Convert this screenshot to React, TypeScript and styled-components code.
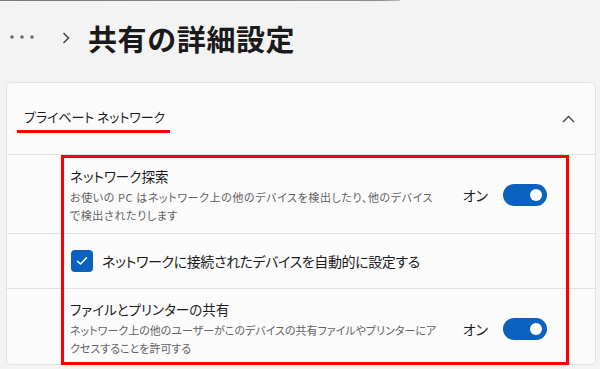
import React from "react";
import styled, { createGlobalStyle } from "styled-components";

const Global = createGlobalStyle`
  html, body { margin: 0; padding: 0; }
  body {
    background: #f3f3f3;
    font-family: "Noto Sans CJK JP", "Noto Sans", sans-serif;
    color: #1b1b1b;
    width: 600px;
    height: 369px;
    overflow: hidden;
  }
`;

const Page = styled.div`
  display: flex;
  flex-direction: column;
  width: 600px;
`;

const TopRule = styled.div`
  width: 400px;
  height: 1px;
  background: linear-gradient(to right, #7a7a7a, #8c8c8c 95%, #bdbdbd);
`;

const Header = styled.div`
  height: 74px;
  display: flex;
  align-items: center;
  padding-left: 9px;
`;

const Dots = styled.svg`
  width: 28px;
  height: 6px;
  margin-top: -2px;
`;

const Crumb = styled.svg`
  width: 8px;
  height: 12px;
  margin-left: 25px;
  margin-top: -1px;
`;

const Title = styled.h1`
  margin: 0 0 0 18px;
  font-size: 29px;
  font-weight: 700;
  letter-spacing: 0.6px;
  color: #1a1a1a;
  line-height: 1;
`;

const Card = styled.div`
  position: relative;
  margin: 7px 0 0 6px;
  width: 590px;
  box-sizing: border-box;
  border: 1px solid #e3e3e3;
  border-radius: 5px;
  background: #fbfbfb;
  display: flex;
  flex-direction: column;
`;

const ExpanderHead = styled.div`
  height: 72px;
  box-sizing: border-box;
  border-bottom: 1px solid #e1e1e1;
  display: flex;
  align-items: center;
  justify-content: space-between;
  padding: 3px 20px 0 10px;
`;

const HeadLabel = styled.span`
  display: inline-block;
  font-size: 13px;
  line-height: 20px;
  font-feature-settings: "palt";
  letter-spacing: -0.1px;
  color: #1b1b1b;
  padding: 0 5px 3px 7px;
  border-bottom: 3px solid #ff0000;
`;

const Chevron = styled.svg`
  width: 13px;
  height: 8px;
  margin-bottom: 3px;
`;

const Row = styled.div<{ $h: number; $pt?: number }>`
  height: ${(p) => p.$h}px;
  box-sizing: border-box;
  display: flex;
  align-items: center;
  padding: ${(p) => p.$pt ?? 0}px 48px 0 63px;
  & + & {
    border-top: 1px solid #e1e1e1;
  }
`;

const Text = styled.div`
  flex: 1;
  display: flex;
  flex-direction: column;
`;

const RowTitle = styled.div`
  font-size: 13.5px;
  line-height: 19px;
  font-feature-settings: "palt";
  color: #1b1b1b;
`;

const RowDesc = styled.div<{ $ls: number }>`
  margin-top: 2px;
  font-size: 11px;
  line-height: 18px;
  letter-spacing: ${(p) => p.$ls}px;
  font-feature-settings: "palt";
  white-space: nowrap;
  color: #626262;
`;

const StateLabel = styled.span`
  font-size: 14px;
  font-feature-settings: "palt";
  color: #1b1b1b;
  margin-right: 15px;
`;

const Toggle = styled.div<{ $on: boolean }>`
  width: 44px;
  height: 22px;
  border-radius: 11px;
  background: ${(p) => (p.$on ? "#0b62be" : "transparent")};
  display: flex;
  align-items: center;
  justify-content: ${(p) => (p.$on ? "flex-end" : "flex-start")};
  padding: 0 5px;
  box-sizing: border-box;
  &::after {
    content: "";
    width: 12px;
    height: 12px;
    border-radius: 50%;
    background: #ffffff;
  }
`;

const Check = styled.div`
  width: 22px;
  height: 22px;
  border-radius: 4px;
  background: #0b62be;
  display: flex;
  align-items: center;
  justify-content: center;
  margin: 0 9px 0 1px;
`;

const CheckLabel = styled.span`
  font-size: 14px;
  letter-spacing: -0.4px;
  font-feature-settings: "palt";
  color: #1b1b1b;
`;

const Annotation = styled.div`
  position: absolute;
  left: 54px;
  top: 72px;
  width: 508px;
  height: 210px;
  box-sizing: border-box;
  border: 3px solid #ff0000;
  pointer-events: none;
`;

export default function App() {
  return (
    <Page>
      <Global />
      <TopRule />
      <Header>
        <Dots viewBox="0 0 28 6">
          <circle cx="3" cy="3" r="1.8" fill="#6b6b6b" />
          <circle cx="13" cy="3" r="1.8" fill="#6b6b6b" />
          <circle cx="23" cy="3" r="1.8" fill="#6b6b6b" />
        </Dots>
        <Crumb viewBox="0 0 8 12">
          <polyline points="1.5,1 6.5,6 1.5,11" fill="none" stroke="#4a4a4a" strokeWidth="1.6" />
        </Crumb>
        <Title>共有の詳細設定</Title>
      </Header>
      <Card>
        <ExpanderHead>
          <HeadLabel>プライベート ネットワーク</HeadLabel>
          <Chevron viewBox="0 0 13 8">
            <polyline points="1,7 6.5,1.5 12,7" fill="none" stroke="#444" strokeWidth="1.4" />
          </Chevron>
        </ExpanderHead>
        <Row $h={78} $pt={2}>
          <Text>
            <RowTitle>ネットワーク探索</RowTitle>
            <RowDesc $ls={0.6}>
              お使いの PC はネットワーク上の他のデバイスを検出したり、他のデバイス
              <br />
              で検出されたりします
            </RowDesc>
          </Text>
          <StateLabel>オン</StateLabel>
          <Toggle $on />
        </Row>
        <Row $h={55}>
          <Check>
            <svg width="12" height="10" viewBox="0 0 12 10">
              <polyline points="1.5,5.2 4.5,8 10.5,1.8" fill="none" stroke="#fff" strokeWidth="1.5" strokeLinecap="round" strokeLinejoin="round" />
            </svg>
          </Check>
          <CheckLabel>ネットワークに接続されたデバイスを自動的に設定する</CheckLabel>
        </Row>
        <Row $h={76} $pt={4}>
          <Text>
            <RowTitle>ファイルとプリンターの共有</RowTitle>
            <RowDesc $ls={0}>
              ネットワーク上の他のユーザーがこのデバイスの共有ファイルやプリンターにア
              <br />
              クセスすることを許可する
            </RowDesc>
          </Text>
          <StateLabel>オン</StateLabel>
          <Toggle $on />
        </Row>
        <Annotation />
      </Card>
    </Page>
  );
}
